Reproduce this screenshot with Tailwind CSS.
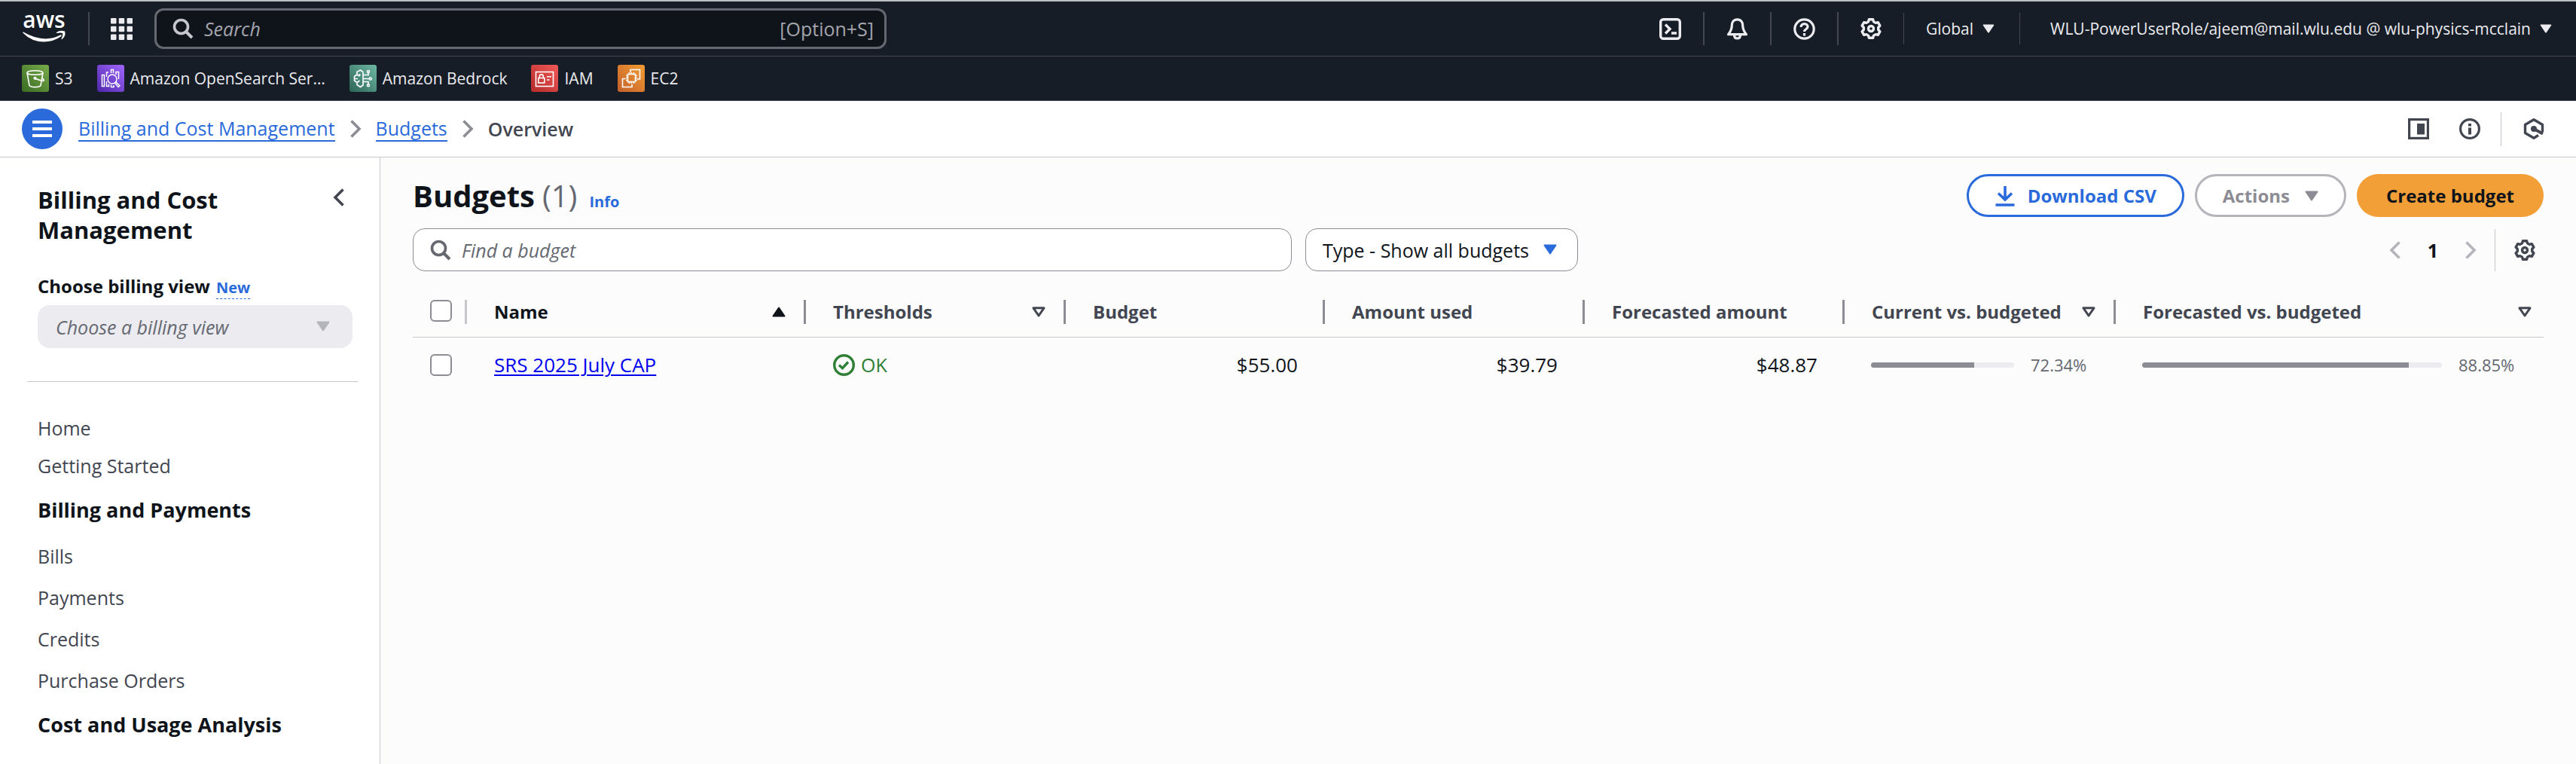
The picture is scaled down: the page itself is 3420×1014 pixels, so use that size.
<!DOCTYPE html>
<html lang="en">
<head>
<meta charset="utf-8">
<title>Budgets</title>
<script src="https://cdn.jsdelivr.net/npm/@tailwindcss/browser@4"></script>
</head>
<body class="min-h-screen flex flex-col bg-[#fcfcfd] font-['Open_Sans','Noto_Sans',sans-serif] text-[25px] leading-9 text-[#0f141a]">
<svg class="hidden" aria-hidden="true">
  <symbol id="gear" viewBox="0 0 28 28"><path d="M11.4 1.8H16.6L17.5 4.85L20.2 6.4L23.3 5.6L25.9 10.1L23.7 12.5V15.5L25.9 17.9L23.3 22.4L20.2 21.6L17.5 23.15L16.6 26.2H11.4L10.5 23.15L7.8 21.6L4.7 22.4L2.1 17.9L4.3 15.5V12.5L2.1 10.1L4.7 5.6L7.8 6.4L10.5 4.85Z" fill="none" stroke="currentColor" stroke-width="3.4" stroke-linejoin="round"/><circle cx="14" cy="14" r="3.5" fill="none" stroke="currentColor" stroke-width="3.4"/></symbol>
  <symbol id="search" viewBox="0 0 28 28"><circle cx="11.5" cy="11.5" r="9" fill="none" stroke="currentColor" stroke-width="3.6"/><path d="M17.5 17.5L26 26" stroke="currentColor" stroke-width="4"/></symbol>
  <symbol id="caret" viewBox="0 0 18 14"><path d="M1.5 1.5H16.5L9 12.5Z" fill="currentColor" stroke="currentColor" stroke-width="2" stroke-linejoin="round"/></symbol>
  <symbol id="caret-open" viewBox="0 0 18 14"><path d="M2 1.8H16L9 12Z" fill="none" stroke="currentColor" stroke-width="3" stroke-linejoin="round"/></symbol>
  <symbol id="chevron" viewBox="0 0 16 26"><path d="M2.5 2.5L13 13L2.5 23.5" fill="none" stroke="currentColor" stroke-width="3.6"/></symbol>
</svg>

<header class="bg-[#161d26] text-[#ebebf0] border-t-2 border-[#b9bfc4]">
  <div class="h-[73px] flex items-center border-b border-[#424650] pl-[30px] pr-8">
    <a href="#" aria-label="AWS home" class="w-[57px] flex flex-col items-center text-white text-[30px] leading-5 font-semibold pb-1">
      <span class="leading-[20px]">aws</span>
      <svg class="w-[57px] h-4 mt-1" viewBox="0 0 57 16" fill="#fff"><path d="M1 2.5Q28 18 50 6.5Q52.500 5.500 51.500 8Q41 15.500 28 15.500Q12 15.500 0.500 3.800Q0 2 1 2.500Z"/><path d="M45 3Q50 -0.500 56 1.500Q58 7 52.500 12Q51 12.500 51.700 11Q54 6 53 4.300Q51.500 3 46 4Q44 4 45 3Z"/></svg>
    </a>
    <span class="ml-[30px] w-[2px] h-11 bg-[#424650]"></span>
    <button aria-label="Services" class="ml-7"><svg class="w-[29px] h-[29px]" viewBox="0 0 29 29" fill="currentColor"><rect width="7.500" height="7.500" rx="1"/><rect x="10.700" width="7.500" height="7.500" rx="1"/><rect x="21.500" width="7.500" height="7.500" rx="1"/><rect y="10.700" width="7.500" height="7.500" rx="1"/><rect x="10.700" y="10.700" width="7.500" height="7.500" rx="1"/><rect x="21.500" y="10.700" width="7.500" height="7.500" rx="1"/><rect y="21.500" width="7.500" height="7.500" rx="1"/><rect x="10.700" y="21.500" width="7.500" height="7.500" rx="1"/><rect x="21.500" y="21.500" width="7.500" height="7.500" rx="1"/></svg></button>
    <label class="ml-[29px] w-[972px] h-[54px] flex items-center gap-[14px] rounded-xl border-3 border-[#656871] bg-[#0f141a] pl-[21px] pr-[14px]">
      <svg class="w-7 h-7 text-[#c6c6cd]"><use href="#search"/></svg>
      <input type="search" aria-label="Search" placeholder="Search" class="flex-1 min-w-0 outline-none italic placeholder:text-[#a4a4ad]">
      <span class="text-[#a4a4ad]">[Option+S]</span>
    </label>
    <nav class="ml-auto flex items-center text-[21px]" aria-label="Account">
      <button aria-label="CloudShell"><svg class="w-[29px] h-[29px]" viewBox="0 0 29 29" fill="none" stroke="currentColor" stroke-width="3.400"><rect x="1.700" y="1.700" width="25.600" height="25.600" rx="3.500"/><path d="M8 8.500L14 14.500L8 20.500M16 20H23"/></svg></button>
      <span class="mx-[29px] w-[2px] h-11 bg-[#424650]"></span>
      <button aria-label="Notifications"><svg class="w-[29px] h-[29px]" viewBox="0 0 29 29" fill="none" stroke="currentColor" stroke-width="3.200" stroke-linejoin="round"><path d="M14.500 1.800C9.500 1.800 7.300 5.500 7.300 9.500C7.300 15 6 17.500 2.500 21.700H26.500C23 17.500 21.700 15 21.700 9.500C21.700 5.500 19.500 1.800 14.500 1.800ZM10.500 23C10.500 25.500 12 27 14.500 27S18.500 25.500 18.500 23"/></svg></button>
      <span class="mx-[29px] w-[2px] h-11 bg-[#424650]"></span>
      <button aria-label="Help"><svg class="w-[29px] h-[29px]" viewBox="0 0 29 29" fill="none" stroke="currentColor" stroke-width="3.200"><circle cx="14.500" cy="14.500" r="12.700"/><path d="M10 12C10 9.300 11.800 7.600 14.500 7.600S19 9.200 19 11.600C19 14.500 14.500 14.500 14.500 18M14.500 20V23.400"/></svg></button>
      <span class="mx-[29px] w-[2px] h-11 bg-[#424650]"></span>
      <button aria-label="Settings"><svg class="w-7 h-7"><use href="#gear"/></svg></button>
      <span class="mx-[29px] w-px h-[42px] bg-[#424650]"></span>
      <button class="flex items-center gap-3">Global <svg class="w-4 h-3"><use href="#caret"/></svg></button>
      <span class="ml-[33px] mr-10 w-px h-[42px] bg-[#424650]"></span>
      <button class="flex items-center gap-3">WLU-PowerUserRole/ajeem@mail.wlu.edu @ wlu-physics-mcclain <svg class="w-4 h-3"><use href="#caret"/></svg></button>
    </nav>
  </div>
  <nav class="h-[59px] flex items-center gap-8 border-b border-[#424650] pl-[29px] text-[21px]" aria-label="Favorites">
    <a href="#" class="flex items-center gap-2"><svg class="w-9 h-9" viewBox="0 0 36 36" fill="none" stroke="#fff" stroke-width="1.600"><defs><linearGradient id="g1" x1="0" y1="1" x2="1" y2="0"><stop stop-color="#3a6b22"/><stop offset="1" stop-color="#78ab4c"/></linearGradient></defs><rect width="36" height="36" rx="3" fill="url(#g1)" stroke="none"/><ellipse cx="17.500" cy="10.500" rx="10.500" ry="2.800"/><path d="M7 10.500L10 27.500C12 30.300 23 30.300 25 27.500L28 10.500M17.500 18C22 20 29.500 22.500 29.300 20.500C29 19 27 17.800 26.700 17.700"/><circle cx="17.500" cy="17.800" r="1.300" fill="#fff"/></svg>S3</a>
    <a href="#" class="flex items-center gap-2"><svg class="w-9 h-9" viewBox="0 0 36 36" fill="none" stroke="#fff" stroke-width="1.500"><defs><linearGradient id="g2" x1="0" y1="1" x2="1" y2="0"><stop stop-color="#4d27a8"/><stop offset="1" stop-color="#a166ff"/></linearGradient></defs><rect width="36" height="36" rx="3" fill="url(#g2)" stroke="none"/><path d="M6.500 13.500H9.500V28.500H6.500ZM12.500 16V10H15M18.500 11V6.500H21.500V11M25 13V9.500H28.500V19M12.500 22V28.500H15.500V25.500M18.500 26.500V29.500H22V27"/><circle cx="20" cy="19" r="6"/><path d="M23.500 24L28 29.500L30 27.800L25 23"/></svg>Amazon OpenSearch Ser…</a>
    <a href="#" class="flex items-center gap-2"><svg class="w-9 h-9" viewBox="0 0 36 36" fill="none" stroke="#fff" stroke-width="1.600"><defs><linearGradient id="g3" x1="0" y1="1" x2="1" y2="0"><stop stop-color="#2c6455"/><stop offset="1" stop-color="#6fb9a4"/></linearGradient></defs><rect width="36" height="36" rx="3" fill="url(#g3)" stroke="none"/><path d="M18 9.500L14.500 7L10 9.500V13L6.500 15.500V21L10 23.500V26.500L14.500 29.500L18 27V9.500M10 13L13.500 15M6.500 18.500H11M13.500 12V15M10 23.500L13.500 21M18 13.500H25V10.500M18 18.500H26M18 22.500H25V25.500"/><circle cx="25" cy="9" r="1.500"/><circle cx="27.700" cy="18.500" r="1.500"/><circle cx="25" cy="27.300" r="1.500"/></svg>Amazon Bedrock</a>
    <a href="#" class="flex items-center gap-2"><svg class="w-9 h-9" viewBox="0 0 36 36" fill="none" stroke="#fff" stroke-width="1.600"><defs><linearGradient id="g4" x1="0" y1="1" x2="1" y2="0"><stop stop-color="#b52a2a"/><stop offset="1" stop-color="#f05a58"/></linearGradient></defs><rect width="36" height="36" rx="3" fill="url(#g4)" stroke="none"/><rect x="6.500" y="9.500" width="23" height="19"/><rect x="9.800" y="17.500" width="8" height="6.500"/><path d="M11.300 17.500V15.500C11.300 12 16.300 12 16.300 15.500V17.500M21 15.800H27M21 20H24.500"/></svg>IAM</a>
    <a href="#" class="flex items-center gap-2"><svg class="w-9 h-9" viewBox="0 0 36 36" fill="none" stroke="#fff" stroke-width="1.600"><defs><linearGradient id="g5" x1="0" y1="1" x2="1" y2="0"><stop stop-color="#c2602b"/><stop offset="1" stop-color="#f39c34"/></linearGradient></defs><rect width="36" height="36" rx="3" fill="url(#g5)" stroke="none"/><path d="M17 10V6.500H29.500V19H26M10.500 18.500H6.500V29.500H19V26"/><rect x="13.500" y="12.500" width="10" height="10"/><path d="M15.500 12V10M18.500 12V10M21.500 12V10M15.500 23V25M18.500 23V25M21.500 23V25M13 14.500H11M13 17.500H11M13 20.500H11M24 14.500H26M24 17.500H26M24 20.500H26"/></svg>EC2</a>
  </nav>
</header>

<div class="h-[75px] flex items-center bg-white border-b border-[#c6c6cd] pl-[29px] pr-[42px] text-[#424650]">
  <button aria-label="Toggle navigation" class="size-[54px] rounded-full bg-[#2a6adb] text-white flex items-center justify-center"><svg class="w-[26px] h-6" viewBox="0 0 26 24" fill="currentColor"><path d="M0 1H26V5H0ZM0 10H26V14H0ZM0 19H26V23H0Z"/></svg></button>
  <nav class="ml-[21px] flex items-center gap-[19px]" aria-label="Breadcrumb">
    <a href="#" class="text-[#2a6adb] border-b-2 border-[#2a6adb] leading-8">Billing and Cost Management</a>
    <svg class="w-4 h-[26px] text-[#8c8c94]"><use href="#chevron"/></svg>
    <a href="#" class="text-[#2a6adb] border-b-2 border-[#2a6adb] leading-8">Budgets</a>
    <svg class="w-4 h-[26px] text-[#8c8c94]"><use href="#chevron"/></svg>
    <span class="font-semibold">Overview</span>
  </nav>
  <div class="ml-auto flex items-center">
    <button aria-label="Split panel"><svg class="w-7 h-7" viewBox="0 0 28 28"><rect x="1.600" y="1.600" width="24.800" height="24.800" fill="none" stroke="currentColor" stroke-width="3.200"/><rect x="12" y="7" width="10" height="14.500" fill="currentColor"/></svg></button>
    <button aria-label="Information" class="ml-10"><svg class="w-7 h-7" viewBox="0 0 28 28"><circle cx="14" cy="14" r="12.400" fill="none" stroke="currentColor" stroke-width="3.200"/><path d="M12 7H16V10.500H12ZM12 12.500H16V21.500H12Z" fill="currentColor"/></svg></button>
    <span class="ml-[27px] w-px h-[45px] bg-[#c6c6cd]"></span>
    <button aria-label="Amazon Q" class="ml-[29px]"><svg class="w-7 h-7" viewBox="0 0 28 28"><path d="M25.500 18V8.500L14 1.800L2.500 8.500V19.500L14 26.200L20 22.500" fill="none" stroke="currentColor" stroke-width="3.400" stroke-linejoin="round"/><circle cx="14" cy="14" r="4" fill="currentColor"/><path d="M14 14L26 20.500" stroke="currentColor" stroke-width="4"/></svg></button>
  </div>
</div>

<div class="flex-1 flex">
  <aside class="w-[505px] shrink-0 bg-white border-r border-[#c6c6cd] pt-9 pl-9 pr-[29px]">
    <div class="flex items-start justify-between pl-[14px] pr-[17px]">
      <h2 class="w-[300px] text-[31px] leading-10 font-bold">Billing and Cost Management</h2>
      <button aria-label="Close navigation" class="pt-1"><svg class="w-4 h-[26px] rotate-180 text-[#424650]"><use href="#chevron"/></svg></button>
    </div>
    <div class="mt-[39px] ml-[14px] mr-[7px]">
      <div class="flex items-baseline gap-2 leading-8 font-bold text-[24px]"><label for="view">Choose billing view</label><a href="#" class="text-[20px] leading-7 text-[#2a6adb] border-b border-dashed border-[#2a6adb]">New</a></div>
      <div class="relative mt-2 text-[#656871]">
        <select id="view" disabled class="appearance-none w-full h-[57px] rounded-2xl bg-[#ebebf0] pl-6 pr-14 italic opacity-100"><option>Choose a billing view</option></select>
        <svg class="absolute right-[30px] top-[21px] w-[18px] h-[14px] text-[#b4b4bb] pointer-events-none"><use href="#caret"/></svg>
      </div>
    </div>
    <hr class="mt-11 border-[#c6c6cd]">
    <nav class="mt-[43px] pl-[14px] text-[#424650]" aria-label="Billing">
      <ul class="flex flex-col gap-[14px]"><li><a href="#">Home</a></li><li><a href="#">Getting Started</a></li></ul>
      <h3 class="mt-[21px] text-[27px] leading-10 font-bold text-[#0f141a]">Billing and Payments</h3>
      <ul class="mt-[23px] flex flex-col gap-[19px]"><li><a href="#">Bills</a></li><li><a href="#">Payments</a></li><li><a href="#">Credits</a></li><li><a href="#">Purchase Orders</a></li></ul>
      <h3 class="mt-[21px] text-[27px] leading-10 font-bold text-[#0f141a]">Cost and Usage Analysis</h3>
    </nav>
  </aside>

  <main class="flex-1 min-w-0 pl-[43px] pr-[43px] pt-[22px]">
    <div class="flex items-center gap-[14px] text-[24px] font-bold">
      <h1 class="mr-auto flex items-baseline text-[40px] leading-[57px]">Budgets<span class="ml-[10px] font-normal text-[#656871]">(1)</span><a href="#" class="ml-4 text-[20px] leading-6 text-[#2a6adb]">Info</a></h1>
      <button class="h-[57px] flex items-center gap-4 rounded-full border-3 border-[#2a6adb] bg-white px-[34px] text-[#2a6adb]"><svg class="w-7 h-7" viewBox="0 0 28 28" fill="none" stroke="currentColor" stroke-width="3.600"><path d="M14 1V18M5 10.500L14 19L23 10.500M1.500 26H26.500"/></svg>Download CSV</button>
      <button disabled class="h-[57px] flex items-center gap-5 rounded-full border-3 border-[#b4b4bb] bg-white px-[34px] text-[#8c8c94]">Actions <svg class="w-[18px] h-[14px]"><use href="#caret"/></svg></button>
      <button class="h-[57px] rounded-full bg-[#f29f38] px-[39px]">Create budget</button>
    </div>
    <div class="mt-[15px] flex items-center">
      <label class="w-[1167px] h-[57px] flex items-center gap-[14px] rounded-2xl border border-[#8c8c94] bg-white px-[22px] text-[#656871]"><svg class="w-7 h-7"><use href="#search"/></svg><input type="search" aria-label="Find a budget" placeholder="Find a budget" class="flex-1 outline-none italic placeholder:text-[#656871]"></label>
      <div class="relative ml-[18px]">
        <select aria-label="Type" class="appearance-none w-[362px] h-[57px] rounded-2xl border border-[#8c8c94] bg-white pl-[22px] pr-14"><option>Type - Show all budgets</option></select>
        <svg class="absolute right-7 top-[21px] w-[18px] h-[14px] text-[#2a6adb] pointer-events-none"><use href="#caret"/></svg>
      </div>
      <div class="ml-auto mr-[11px] flex items-center">
        <button aria-label="Previous page" disabled class="text-[#b4b4bb]"><svg class="w-4 h-[26px] rotate-180"><use href="#chevron"/></svg></button>
        <span class="w-[84px] text-center font-bold">1</span>
        <button aria-label="Next page" disabled class="text-[#b4b4bb]"><svg class="w-4 h-[26px]"><use href="#chevron"/></svg></button>
        <span class="ml-6 w-px h-14 bg-[#c6c6cd]"></span>
        <button aria-label="Preferences" class="ml-[25px] text-[#424650]"><svg class="w-7 h-7"><use href="#gear"/></svg></button>
      </div>
    </div>
    <table class="mt-[21px] w-full table-fixed text-left">
      <colgroup><col class="w-[72px]"><col class="w-[450px]"><col class="w-[345px]"><col class="w-[344px]"><col class="w-[345px]"><col class="w-[345px]"><col class="w-[360px]"><col></colgroup>
      <thead class="text-[24px] font-bold text-[#424650]">
        <tr class="h-[66px] border-b border-[#c6c6cd]">
          <th class="p-0"><div class="h-8 pl-[23px] border-r-3 border-[#c6c6cd]"><input type="checkbox" aria-label="Select all" class="block appearance-none size-[29px] rounded-md border-2 border-[#8c8c94] bg-white"></div></th>
          <th class="p-0 text-[#0f141a]"><div class="h-8 flex items-center justify-between pl-9 pr-6 border-r-3 border-[#8c8c94]">Name<svg class="w-[18px] h-[14px] rotate-180"><use href="#caret"/></svg></div></th>
          <th class="p-0"><div class="h-8 flex items-center justify-between pl-9 pr-6 border-r-3 border-[#8c8c94]">Thresholds<svg class="w-[18px] h-[14px]"><use href="#caret-open"/></svg></div></th>
          <th class="p-0"><div class="h-8 flex items-center pl-9 border-r-3 border-[#8c8c94]">Budget</div></th>
          <th class="p-0"><div class="h-8 flex items-center pl-9 border-r-3 border-[#8c8c94]">Amount used</div></th>
          <th class="p-0"><div class="h-8 flex items-center pl-9 border-r-3 border-[#8c8c94]">Forecasted amount</div></th>
          <th class="p-0"><div class="h-8 flex items-center justify-between pl-9 pr-6 border-r-3 border-[#8c8c94]">Current vs. budgeted<svg class="w-[18px] h-[14px]"><use href="#caret-open"/></svg></div></th>
          <th class="p-0"><div class="h-8 flex items-center justify-between pl-9 pr-4">Forecasted vs. budgeted<svg class="w-[18px] h-[14px]"><use href="#caret-open"/></svg></div></th>
        </tr>
      </thead>
      <tbody class="text-[26px]">
        <tr class="h-[74px]">
          <td class="p-0 pl-[23px]"><input type="checkbox" aria-label="Select SRS 2025 July CAP" class="block appearance-none size-[29px] rounded-md border-2 border-[#8c8c94] bg-white"></td>
          <td class="p-0 pl-9"><a href="#" class="text-[#0000ee] underline decoration-2 underline-offset-3">SRS 2025 July CAP</a></td>
          <td class="p-0 pl-9"><span class="flex items-center gap-2 text-[#2f7f35] text-[25px]"><svg class="w-[29px] h-[29px]" viewBox="0 0 29 29" fill="none" stroke="currentColor" stroke-width="3.400"><circle cx="14.500" cy="14.500" r="12.800"/><path d="M8 14.500L12.500 18.700L20 10.500"/></svg>OK</span></td>
          <td class="p-0 pr-9 text-right">$55.00</td>
          <td class="p-0 pr-9 text-right">$39.79</td>
          <td class="p-0 pr-9 text-right">$48.87</td>
          <td class="p-0 pl-[35px] pr-9"><div class="flex items-center gap-[22px]"><div class="flex-1 h-[7px] rounded-full overflow-hidden bg-[#ebebf0]"><div class="h-full bg-[#8c8c94]" style="width:72.34%"></div></div><span class="w-[77px] text-[22px] text-[#656871]">72.34%</span></div></td>
          <td class="p-0 pl-[35px] pr-9"><div class="flex items-center gap-[22px]"><div class="flex-1 h-[7px] rounded-full overflow-hidden bg-[#ebebf0]"><div class="h-full bg-[#8c8c94]" style="width:88.85%"></div></div><span class="w-[77px] text-[22px] text-[#656871]">88.85%</span></div></td>
        </tr>
      </tbody>
    </table>
  </main>
</div>
</body>
</html>
